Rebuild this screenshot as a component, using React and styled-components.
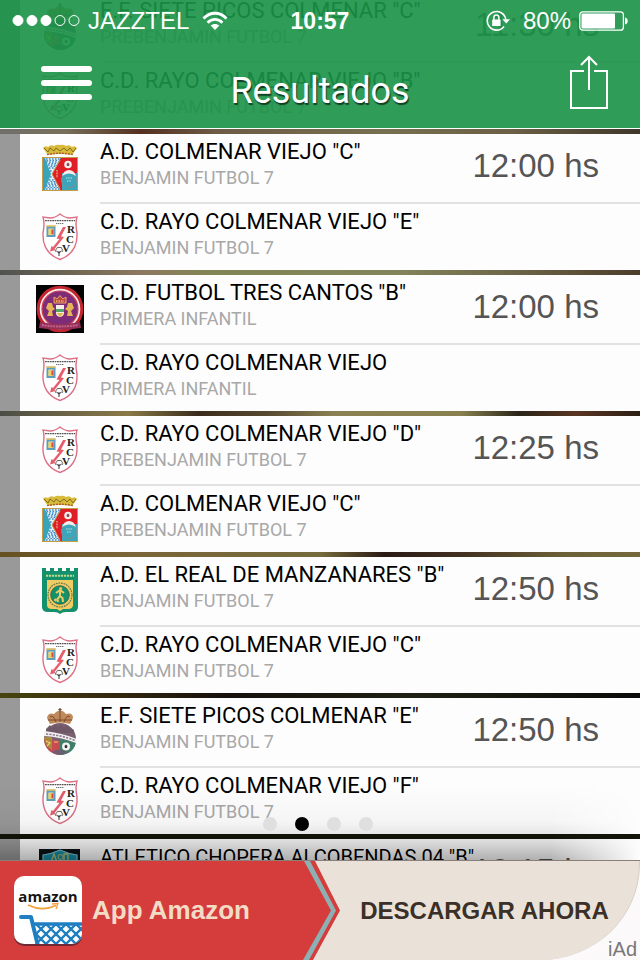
import React, { useState } from 'react'
import styled, { createGlobalStyle } from 'styled-components'


const GlobalStyle = createGlobalStyle`
    * {
        box-sizing: border-box;
    }
    body {
        margin: 0;
        background-color: #fff;
        font-family: Roboto, "Noto Sans", sans-serif;
    }
    button {
        margin: 0;
        padding: 0;
        border: 0;
        background: none;
        font: inherit;
        color: inherit;
        cursor: pointer;
    }
    svg {
        display: block;
    }
`

const Screen = styled.div`
    position: relative;
    display: flex;
    flex-direction: column;
    height: 100vh;
    overflow: hidden;
`

const Header = styled.header`
    position: absolute;
    top: 0;
    left: 0;
    right: 0;
    z-index: 2;
    color: #fff;
    background-color: rgba(26, 146, 71, 0.91);
    border-bottom: 1px solid #fff;
`

const StatusBar = styled.div`
    display: grid;
    grid-template-columns: 1fr auto 1fr;
    align-items: center;
    height: 41px;
    padding: 0 12px;
    font-family: "Liberation Sans", Arial, sans-serif;
    font-size: 24px;
    line-height: 40px;
`

const StatusGroup = styled.div`
    display: flex;
    align-items: center;
    justify-content: ${props => props.$end ? 'flex-end' : 'flex-start'};
    gap: 8px;
`

const Clock = styled.span`
    font-size: 23px;
    font-weight: bold;
`

const NavBar = styled.nav`
    display: grid;
    grid-template-columns: 1fr auto 1fr;
    align-items: center;
    height: 87px;
    padding: 0 32px;
`

const NavButton = styled.button`
    justify-self: ${props => props.$end ? 'end' : 'start'};
    padding-bottom: ${props => props.$end ? '6px' : '4px'};
`

const Title = styled.h1`
    margin: 0;
    padding-top: 12px;
    font-size: 36px;
    font-weight: 400;
    line-height: 44px;
    text-shadow: 1px 2px 1px rgba(0, 0, 0, 0.6);
`

/* match list */
const Feed = styled.main`
    flex: 1;
    min-height: 0;
    position: relative;
    overflow: hidden;
`

const MatchList = styled.ul`
    margin: -12px 0 0;
    padding: 0;
    list-style: none;
`

const Match = styled.li`
    padding-top: 5px;
    background: ${props => props.$edge};
`

const MatchCard = styled.div`
    background-color: #fdfdfd;
    border-left: 20px solid #999;
`

const TeamRow = styled.div`
    display: flex;
    height: ${props => props.$first ? '70px' : '66px'};
    padding-left: 16px;
`

const CrestBox = styled.div`
    display: flex;
    align-items: center;
    flex-shrink: 0;
    width: 64px;
    padding-bottom: ${props => props.$first ? '2px' : '0'};
`

const TeamBody = styled.div`
    flex: 1;
    min-width: 0;
    display: flex;
    justify-content: space-between;
    padding: 5px 41px 0 0;
    border-bottom: ${props => props.$first ? '2px solid #e2e2e2' : '0'};
`

const TeamText = styled.div`
    min-width: 0;
    white-space: nowrap;
    line-height: 26px;
`

/* very long names get a smaller size so they clear the time */
const TeamName = styled.div`
    font-size: ${props => props.$long ? '20px' : '22px'};
    color: #000;
`

const TeamCategory = styled.div`
    font-size: 18px;
    color: #a8a8a8;
`

const KickOff = styled.time`
    flex-shrink: 0;
    font-family: "Liberation Sans", Arial, sans-serif;
    font-size: 33px;
    line-height: 54px;
    color: #555;
`

const BottomShade = styled.div`
    position: absolute;
    left: 0;
    right: 0;
    bottom: 0;
    height: 76px;
    pointer-events: none;
    background: linear-gradient(to bottom, transparent, rgba(0, 0, 0, 0.03) 50%, rgba(0, 0, 0, 0.12) 74%, rgba(0, 0, 0, 0.3));
    mask-image: linear-gradient(to right, #000 86%, transparent);
`

const Pager = styled.div`
    position: absolute;
    left: 0;
    right: 4px;
    bottom: 29px;
    display: flex;
    justify-content: center;
    gap: 18px;
`

const PagerDot = styled.button`
    width: 14px;
    height: 14px;
    border-radius: 50%;
    background-color: ${props => props.$active ? '#000' : '#dfdfdf'};
`

/* ad banner */
const Banner = styled.aside`
    position: relative;
    display: flex;
    height: 100px;
    border-top: 1px solid #8b8079;
    background-color: #fcf9fb;
    font-family: "Liberation Sans", Arial, sans-serif;
    font-weight: bold;
`

const BannerApp = styled.div`
    flex: 0 1 300px;
    display: flex;
    align-items: center;
    gap: 10px;
    padding-left: 14px;
    background-color: #d53c3c;
    color: #f3dcc5;
    font-size: 26px;
    white-space: nowrap;
`

const BannerAction = styled.div`
    flex: 1;
    display: flex;
    background-color: #eae2d8;
    border-right: 1px solid #d5cec3;
    border-bottom-right-radius: 100px 96px;
`

const DownloadButton = styled.button`
    flex: 1;
    padding-right: 10px;
    font-size: 24px;
    color: #3b3027;
    white-space: nowrap;
`

const AdMark = styled.span`
    position: absolute;
    right: 3px;
    bottom: 0;
    font-size: 20px;
    font-weight: normal;
    line-height: 22px;
    color: #777;
`

const SignalIcon = () => (
    <svg width="68" height="13" viewBox="0 0 68 13" fill="#fff" stroke="#fff" aria-hidden="true">
        <circle cx="6" cy="6.5" r="5" />
        <circle cx="20" cy="6.5" r="5" />
        <circle cx="34" cy="6.5" r="5" />
        <circle cx="48" cy="6.5" r="5" fill="none" />
        <circle cx="62" cy="6.5" r="5" fill="none" />
    </svg>
)

const WifiIcon = () => (
    <svg width="32" height="20" viewBox="-5 0 32 20" fill="none" stroke="#fff" strokeWidth="2.8" aria-hidden="true">
        <path d="M1.5 7.5 C8 .5 18 .5 24.5 7.5" />
        <path d="M5.6 11.7 C10 7.3 16 7.3 20.4 11.7" />
        <path d="M13 19 L8.6 14.6 C11 12.4 15 12.4 17.4 14.6 Z" fill="#fff" stroke="none" />
    </svg>
)

const RotationLockIcon = () => (
    <svg width="29" height="22" viewBox="0 0 29 22" aria-hidden="true">
        <path d="M19.8 9.500 A9.3 9.3 0 1 0 18 16.5" fill="none" stroke="#fff" strokeWidth="1.6" />
        <path d="M16.4 9.2 H24 L20.2 13.6 Z" fill="#fff" />
        <rect x="6.2" y="9.6" width="8.4" height="6.4" rx="0.6" fill="#fff" />
        <path d="M7.9 10 V7.6 a2.5 2.5 0 0 1 5 0 V10" fill="none" stroke="#fff" strokeWidth="1.5" />
    </svg>
)

const BatteryIcon = () => (
    <svg width="49" height="20" viewBox="0 0 49 20" aria-hidden="true">
        <rect x="0.8" y="0.8" width="43.6" height="18.4" rx="3" fill="none" stroke="#fff" strokeWidth="1.3" />
        <rect x="2.5" y="2.5" width="33.5" height="15" rx="1" fill="#fff" />
        <path d="M46 6.5 a3.6 3.6 0 0 1 0 7 Z" fill="#fff" />
    </svg>
)

const MenuIcon = () => (
    <svg width="62" height="36" viewBox="0 0 62 36" fill="#fff" aria-hidden="true">
        <rect x="9" y="1" width="51" height="6" rx="3" />
        <rect x="9" y="15" width="51" height="6" rx="3" />
        <rect x="9" y="29" width="51" height="6" rx="3" />
    </svg>
)

const ShareIcon = () => (
    <svg width="38" height="54" viewBox="0 0 38 54" fill="none" stroke="#fff" strokeWidth="2" aria-hidden="true">
        <path d="M14 16 H1 V53 H37 V16 H24" />
        <path d="M19 35 V2" />
        <path d="M11 10 L19 2 L27 10" />
    </svg>
)

const ColmenarCrest = () => (
    <svg width="48" height="48" viewBox="0 0 48 48" role="img" aria-label="A.D. Colmenar Viejo">
        <path d="M7 4 Q9 1 12 3 Q15 0 18 2 Q21 0 24 1 Q27 0 30 2 Q33 0 36 3 Q39 1 41 4 L36 11 Q24 9 12 11 Z" fill="#d9bb3c" />
        <path d="M8 4 L12 8 L14 4 L18 7 L20 4 L24 7 L28 4 L31 7 L34 4 L37 8 L40 4" fill="none" stroke="#7d6418" strokeWidth=".9" />
        <path d="M11 10.500 Q24 8 37 10.500" fill="none" stroke="#a7602f" strokeWidth="1.4" strokeDasharray="2 1" />
        <rect x="6.5" y="13.5" width="35" height="33" fill="#39a3b9" stroke="#c49c45" />
        <path d="M9 14 H24 L16 30 L24 46 H9 L15 30 Z" fill="#e4f0f7" />
        <path d="M10 15 H23 M10 18 H22 M12 21 H20 M13 24 H19 M14 27 H17 M14 33 H17 M13 36 H19 M12 39 H20 M10 42 H22 M10 45 H23" stroke="#3c8bc7" strokeWidth="1.4" strokeDasharray="1.6 1.4" />
        <path d="M9 16.500 H22 M11 19.500 H20 M13 22.500 H19 M13 37.500 H19 M11 40.500 H20 M10 43.500 H22" stroke="#3c8bc7" strokeWidth="1.2" strokeDasharray="1.6 1.4" strokeDashoffset="1.5" />
        <path d="M25 14 H41 V29 H26 V46 H24 L16 30 Z" fill="#e01e25" />
        <path d="M24 16 L16 30 L24 45" fill="none" stroke="#c9a05a" strokeWidth="1" />
        <circle cx="32" cy="20.500" r="3.8" fill="#f5eeee" />
        <path d="M30.500 20 L32 18.5 L33.500 20 L33 22 H31 Z" fill="#8c4b50" />
        <rect x="26" y="31" width="15" height="15" fill="#3aa5bb" />
        <circle cx="33" cy="36" r="7.5" fill="#3aa5bb" stroke="#7f9394" strokeWidth="1.2" strokeDasharray="1.6 .8" />
        <path d="M26 32 Q28 26 33 26 Q38 26 40 32 Q33 27 26 32" fill="#f2ecec" />
        <path d="M30 34 H36 M31 37 H35" stroke="#cfe0d8" strokeWidth="1" strokeDasharray="1.5 .8" />
        <path d="M21 26 V34" stroke="#f1c2a5" strokeWidth="1.2" strokeDasharray="1.6 1" />
    </svg>
)

const RayoCrest = () => (
    <svg width="48" height="48" viewBox="0 0 48 48" role="img" aria-label="C.D. Rayo Colmenar Viejo">
        <path d="M24 1 Q29 5 34 5 L41 4 Q39 10 41 20 Q42 40 24 46.5 Q6 40 7 20 Q9 10 7 4 L14 5 Q19 5 24 1 Z" fill="#fff" stroke="#dd7085" strokeWidth="1.4" />
        <path d="M9 7.6 H39" stroke="#555" strokeWidth="1.3" strokeDasharray="1.8 .6" />
        <path d="M20 10.500 H28" stroke="#777" strokeWidth="1.2" strokeDasharray="1.4 .6" />
        <rect x="10.500" y="13.5" width="9" height="10.5" fill="#5d9fba" />
        <rect x="12.500" y="15.500" width="5" height="6.500" fill="#e9dfd0" />
        <rect x="12.500" y="16" width="2.4" height="6" fill="#f0d25b" />
        <rect x="15.4" y="16.4" width="2" height="5" fill="#d94943" />
        <path d="M10.3 13 H19.7" stroke="#d8b04a" strokeWidth="1.4" />
        <path d="M27 14 L20.5 25.5 L23.5 26 L17 34 L15.5 33 L14 38.500 L19.5 37 L18.5 36 L28 24 L25 23.5 L30 14 Z" fill="#e65e6c" />
        <path d="M23 43 V38 M23 40 L20.500 38 M23 40 L25.500 38" stroke="#333" strokeWidth="1" fill="none" />
        <path d="M20 39 Q18.500 37 20.500 36 Q21 33.500 23 34.500 Q26 33.500 26 36 Q27.500 37.500 26 39" stroke="#555" strokeWidth=".9" fill="none" />
        <g fontFamily="Liberation Serif, serif" fontWeight="bold" fontSize="11" fill="#222">
            <text x="31" y="20">R</text>
            <text x="30" y="30">C</text>
            <text x="26" y="39">V</text>
        </g>
    </svg>
)

const TresCantosCrest = () => (
    <svg width="48" height="48" viewBox="0 0 48 48" role="img" aria-label="C.D. Futbol Tres Cantos">
        <rect width="48" height="48" fill="#050404" />
        <circle cx="24" cy="24" r="21.8" fill="#f3ecec" stroke="#c4262f" strokeWidth="3" />
        <circle cx="24" cy="24" r="18" fill="#7e2b78" stroke="#cf4152" strokeWidth="1.2" />
        <path d="M18 18 V12 L21 14 L24 10.5 L27 14 L30 12 V18 Z" fill="#b5493f" stroke="#e8a56e" strokeWidth="1" />
        <path d="M20 16 H28" stroke="#f0b76b" strokeWidth="1.4" strokeDasharray="1.5 1" />
        <path d="M11 31 L13 26 L10 23 L12 18 L16 18 L17 22 L19 24 L16 26 L17 31 Z" fill="#e3b556" />
        <path d="M37 31 L35 26 L38 23 L36 18 L32 18 L31 22 L29 24 L32 26 L31 31 Z" fill="#e3b556" />
        <path d="M20 20 H28 V28 Q28 31 24 32 Q20 31 20 28 Z" fill="#f5efe7" />
        <path d="M20 24 H28 V27 H20 Z" fill="#57a26b" />
        <path d="M20.5 28 H27.5 L24 32 Z" fill="#e7b43e" />
        <path d="M4 37 Q24 41 44 37 L45 43 Q24 46 3 43 Z" fill="#93315c" />
        <path d="M6 40 Q24 43 42 40" fill="none" stroke="#c36489" strokeWidth="1.8" strokeDasharray="2 .8" />
    </svg>
)

const ManzanaresCrest = () => (
    <svg width="48" height="48" viewBox="0 0 48 48" role="img" aria-label="A.D. El Real de Manzanares">
        <path d="M6 1 H10 V4 H14 V1 H18 V4 H22 V1 H26 V4 H30 V1 H34 V4 H38 V1 H42 V40 Q42 45 36 45 H30 Q26 45 24 47 Q22 45 18 45 H12 Q6 45 6 40 Z" fill="#14916c" />
        <path d="M11 13 H37 V38 Q37 42 32 42 H27 L24 44 L21 42 H16 Q11 42 11 38 Z" fill="#f0cc62" />
        <path d="M10 8.8 H38" stroke="#bbdb8a" strokeWidth="2" strokeDasharray="2.2 .8" />
        <circle cx="24" cy="28" r="12" fill="none" stroke="#6b7749" strokeWidth="1.2" strokeDasharray="1.8 .8" />
        <circle cx="24" cy="28" r="9.3" fill="#14916c" stroke="#3c5b3a" strokeWidth=".8" />
        <circle cx="24.6" cy="21.6" r="1.5" fill="#f0cc62" />
        <path d="M24 23 L20 26 M24 23 L28 26 M24 23 V29 L21.5 32 L22 35 M24 29 L26.5 31 L27 35" fill="none" stroke="#f0cc62" strokeWidth="2" />
        <circle cx="19.5" cy="33" r="1.4" fill="#f0cc62" />
    </svg>
)

const SietePicosCrest = () => (
    <svg width="48" height="48" viewBox="0 0 48 48" role="img" aria-label="E.F. Siete Picos Colmenar">
        <path d="M14 16 L11 10 Q12 4 18 6 Q22 2 24 3 Q27 2 30 6 Q37 4 37 10 L34 16 Q24 13 14 16 Z" fill="#c08a5a" />
        <path d="M14 9 Q17 6 20 14 M24 4 V14 M34 9 Q31 6 28 14 M12 12 H36" fill="none" stroke="#7c4c30" strokeWidth="1" />
        <path d="M24 0 V4 M22.4 1.6 H25.6" stroke="#6c4a35" strokeWidth="1.2" />
        <circle cx="24" cy="31" r="16" fill="#7b6170" />
        <path d="M10 21 L14 17 L16 20 L19 16 L22 19 L25 16 L28 19 L31 17 L34 20 L38 22 V25 H10 Z" fill="#6f5868" />
        <path d="M8 31 Q8 34 10 38 Q14 46 24 47 V33 Z" fill="#c84b50" />
        <path d="M8 29 H16 V42 Q9 38 8 29 Z" fill="#a98a3d" />
        <path d="M24 31 L40 34 Q38 46 24 47 Z" fill="#3f7f69" />
        <path d="M8 23 Q26 25 41 31 L40 35 Q25 29 8 28 Z" fill="#f4f1f3" />
        <path d="M10 26 Q25 27 39 32.500" fill="none" stroke="#8b7d8b" strokeWidth="1.6" strokeDasharray="2.2 1.2" />
        <circle cx="30" cy="38.5" r="4" fill="#f3f3f3" />
        <path d="M28.5 38 L30 36.6 L31.5 38 L31 40 H29 Z" fill="#333" />
        <path d="M10 33 L14 35 L11 38 M18 34 H22" fill="none" stroke="#efcf6b" strokeWidth="1.2" />
        <path d="M16 44 Q24 39 32 44.500 Q24 49 16 44" fill="#6d5d70" />
    </svg>
)

const ChoperaCrest = () => (
    <svg width="48" height="48" viewBox="0 0 48 48" role="img" aria-label="Atletico Chopera Alcobendas">
        <rect x="3" width="41" height="48" fill="#0b1216" />
        <path d="M7 6 Q15 5 24 1 Q33 5 41 6 V28 Q40 40 24 47 Q8 40 7 28 Z" fill="#178ca4" stroke="#7ac3d0" strokeWidth="1.2" />
        <path d="M15 13 L18 5 L21 13 M28 13 V5 H32 V13" fill="none" stroke="#b9bd70" strokeWidth="1.3" />
        <circle cx="24.500" cy="8" r="2.500" fill="none" stroke="#b9bd70" />
    </svg>
)

const AmazonIcon = () => (
    <svg width="68" height="70" viewBox="0 0 68 70" role="img" aria-label="Amazon">
        <defs>
            <clipPath id="tile">
                <rect width="68" height="68" rx="10" />
            </clipPath>
        </defs>
        <rect y="2" width="68" height="68" rx="10" fill="#712a35" />
        <rect width="68" height="68" rx="10" fill="#fff" />
        <text x="34" y="26" textAnchor="middle" fontFamily="Open Sans, Noto Sans, sans-serif" fontWeight="bold" fontSize="15" fill="#151515">amazon</text>
        <path d="M14 29 Q28 36 42 29.500" fill="none" stroke="#f3a03c" strokeWidth="1.8" />
        <path d="M38 28 L44 27.500 L42 33" fill="none" stroke="#f3a03c" strokeWidth="1.3" />
        <g clipPath="url(#tile)" fill="none" stroke="#1f7fc1">
            <path d="M7 41 H17 L24 70" strokeWidth="4" strokeLinecap="round" strokeLinejoin="round" />
            <path d="M20 48 H68" strokeWidth="3.4" />
            <path d="M22 48 L44 70 M32 48 L54 70 M42 48 L64 70 M52 48 L74 70 M62 48 L84 70 M22 58 L34 70 M32 48 L22 58 M42 48 L22 68 M52 48 L30 70 M62 48 L40 70 M72 48 L50 70 M82 48 L60 70" strokeWidth="2.4" />
        </g>
    </svg>
)

const BannerArrow = () => (
    <svg width="40" height="99" viewBox="0 0 40 99" preserveAspectRatio="none" aria-hidden="true">
        <rect width="40" height="99" fill="#eae2d8" />
        <path d="M0 0 H15 L40 49.500 L13 99 H0 Z" fill="#d53c3c" />
        <path d="M4 0 H10 L36 49.500 L9 99 H3 L31 49.500 Z" fill="#8db0b3" />
    </svg>
)

const crests = {
    colmenar: ColmenarCrest,
    rayo: RayoCrest,
    tresCantos: TresCantosCrest,
    manzanares: ManzanaresCrest,
    sietePicos: SietePicosCrest,
    chopera: ChoperaCrest,
}

const matches = [
    {
        time: '11:30 hs',
        category: 'PREBENJAMIN FUTBOL 7',
        edge: '#5d5a44',
        teams: [['sietePicos', 'E.F. SIETE PICOS COLMENAR "C"'], ['rayo', 'C.D. RAYO COLMENAR VIEJO "B"']],
    },
    {
        time: '12:00 hs',
        category: 'BENJAMIN FUTBOL 7',
        edge: 'linear-gradient(to right, #706f6a, #77705c 10%, #55301f 22%, #6d5c45 34%, #777050 60%, #6b5f45 80%, #3f3729)',
        teams: [['colmenar', 'A.D. COLMENAR VIEJO "C"'], ['rayo', 'C.D. RAYO COLMENAR VIEJO "E"']],
    },
    {
        time: '12:00 hs',
        category: 'PRIMERA INFANTIL',
        edge: 'linear-gradient(to right, #50524f, #716853 12%, #8d7862 22%, #828555 32%, #84845c 62%, #6d6548 80%, #4c3d2b)',
        teams: [['tresCantos', 'C.D. FUTBOL TRES CANTOS "B"'], ['rayo', 'C.D. RAYO COLMENAR VIEJO']],
    },
    {
        time: '12:25 hs',
        category: 'PREBENJAMIN FUTBOL 7',
        edge: 'linear-gradient(to right, #4b4d45, #8a7947 20%, #392c1c 31%, #574a30 42%, #8a8053 52%, #88814f 72%, #2b2419 81%, #5a3522 90%, #2d1f16)',
        teams: [['rayo', 'C.D. RAYO COLMENAR VIEJO "D"'], ['colmenar', 'A.D. COLMENAR VIEJO "C"']],
    },
    {
        time: '12:50 hs',
        category: 'BENJAMIN FUTBOL 7',
        edge: 'linear-gradient(to right, #655020, #7a6538 20%, #756b3d 50%, #2a1a14 60%, #423021 72%, #6c6037 88%, #75683b)',
        teams: [['manzanares', 'A.D. EL REAL DE MANZANARES "B"'], ['rayo', 'C.D. RAYO COLMENAR VIEJO "C"']],
    },
    {
        time: '12:50 hs',
        category: 'BENJAMIN FUTBOL 7',
        edge: 'linear-gradient(to right, #47450f, #3a2c10 14%, #17100c 35%, #202113 65%, #0a0b09)',
        teams: [['sietePicos', 'E.F. SIETE PICOS COLMENAR "E"'], ['rayo', 'C.D. RAYO COLMENAR VIEJO "F"']],
    },
    {
        time: '12:15 hs',
        category: 'BENJAMIN FUTBOL 7',
        edge: '#14150a',
        teams: [['chopera', 'ATLETICO CHOPERA ALCOBENDAS 04 "B"'], ['rayo', 'C.D. RAYO COLMENAR VIEJO']],
    },
]

const Team = ({ crest, name, category, time }) => {
    const Crest = crests[crest]
    const first = Boolean(time)
    return (
        <TeamRow $first={first}>
            <CrestBox $first={first}>
                <Crest />
            </CrestBox>
            <TeamBody $first={first}>
                <TeamText>
                    <TeamName $long={name.length > 30}>{name}</TeamName>
                    <TeamCategory>{category}</TeamCategory>
                </TeamText>
                {time && <KickOff>{time}</KickOff>}
            </TeamBody>
        </TeamRow>
    )
}

const App = () => {
    const [page, setPage] = useState(1)
    return (
        <Screen>
            <GlobalStyle />

            <Header>
                <StatusBar>
                    <StatusGroup>
                        <SignalIcon />
                        <span>JAZZTEL</span>
                        <WifiIcon />
                    </StatusGroup>
                    <Clock>10:57</Clock>
                    <StatusGroup $end>
                        <RotationLockIcon />
                        <span>80%</span>
                        <BatteryIcon />
                    </StatusGroup>
                </StatusBar>
                <NavBar>
                    <NavButton aria-label="Menú">
                        <MenuIcon />
                    </NavButton>
                    <Title>Resultados</Title>
                    <NavButton $end aria-label="Compartir">
                        <ShareIcon />
                    </NavButton>
                </NavBar>
            </Header>

            <Feed>
                <MatchList>
                    {matches.map((match, i) => (
                        <Match key={i} $edge={match.edge}>
                            <MatchCard>
                                <Team
                                    crest={match.teams[0][0]}
                                    name={match.teams[0][1]}
                                    category={match.category}
                                    time={match.time}
                                />
                                <Team
                                    crest={match.teams[1][0]}
                                    name={match.teams[1][1]}
                                    category={match.category}
                                />
                            </MatchCard>
                        </Match>
                    ))}
                </MatchList>
                <BottomShade />
                <Pager>
                    {[0, 1, 2, 3].map(n => (
                        <PagerDot
                            key={n}
                            $active={n === page}
                            aria-label={`Página ${n + 1}`}
                            onClick={() => setPage(n)}
                        />
                    ))}
                </Pager>
            </Feed>

            <Banner>
                <BannerApp>
                    <AmazonIcon />
                    <span>App Amazon</span>
                </BannerApp>
                <BannerArrow />
                <BannerAction>
                    <DownloadButton>DESCARGAR AHORA</DownloadButton>
                </BannerAction>
                <AdMark>iAd</AdMark>
            </Banner>
        </Screen>
    )
}

export default App
